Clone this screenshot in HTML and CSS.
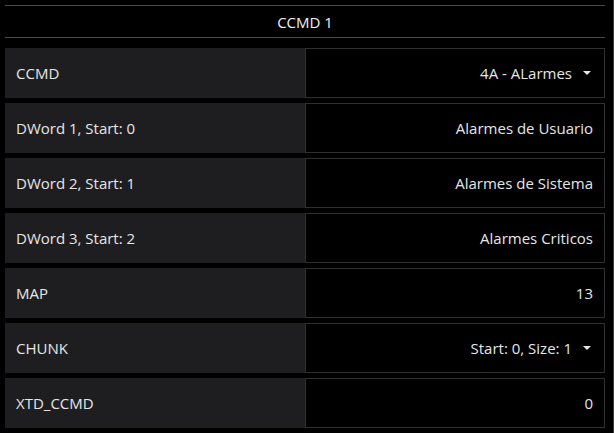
FILE: index.html
```html
<!DOCTYPE html>
<html>
<head>
<meta charset="utf-8">
<link rel="stylesheet" href="styles.css">
</head>
<body>
<div class="panel">
  <div class="header">CCMD 1</div>
  <div class="rows">
    <div class="row"><div class="label">CCMD</div><div class="value">4A - ALarmes<span class="caret"></span></div></div>
    <div class="row"><div class="label">DWord 1, Start: 0</div><div class="value">Alarmes de Usuario</div></div>
    <div class="row"><div class="label">DWord 2, Start: 1</div><div class="value">Alarmes de Sistema</div></div>
    <div class="row"><div class="label">DWord 3, Start: 2</div><div class="value">Alarmes Criticos</div></div>
    <div class="row"><div class="label">MAP</div><div class="value">13</div></div>
    <div class="row"><div class="label">CHUNK</div><div class="value">Start: 0, Size: 1<span class="caret"></span></div></div>
    <div class="row"><div class="label">XTD_CCMD</div><div class="value">0</div></div>
  </div>
</div>
</body>
</html>
```
FILE: styles.css
```css
html, body {
  margin: 0;
  padding: 0;
  background: #000;
}
body {
  width: 614px;
  height: 433px;
  box-sizing: border-box;
  padding: 5px 9px 0 5px;
  border-right: 1px solid #3a3a3a;
  font-family: "Open Sans", "Noto Sans", sans-serif;
  font-size: 15px;
  color: #e6e6e6;
  overflow: hidden;
}
.panel {
  width: 600px;
}
.header {
  height: 31px;
  border-top: 1px solid #4a4a4a;
  border-bottom: 1px solid #4a4a4a;
  display: flex;
  align-items: center;
  justify-content: center;
  color: #f0f0f0;
}
.rows {
  margin-top: 10px;
  display: flex;
  flex-direction: column;
  gap: 5px;
}
.row {
  display: flex;
  height: 50px;
}
.label {
  width: 300px;
  background: #1e1e20;
  display: flex;
  align-items: center;
  padding-left: 11px;
  box-sizing: border-box;
}
.value {
  flex: 1;
  border: 1px solid #303030;
  display: flex;
  align-items: center;
  justify-content: flex-end;
  padding-right: 11px;
  box-sizing: border-box;
  white-space: pre;
}
.caret {
  width: 0;
  height: 0;
  border-left: 4px solid transparent;
  border-right: 4px solid transparent;
  border-top: 4px solid #e6e6e6;
  margin-left: 11px;
  margin-right: 2px;
}
```
